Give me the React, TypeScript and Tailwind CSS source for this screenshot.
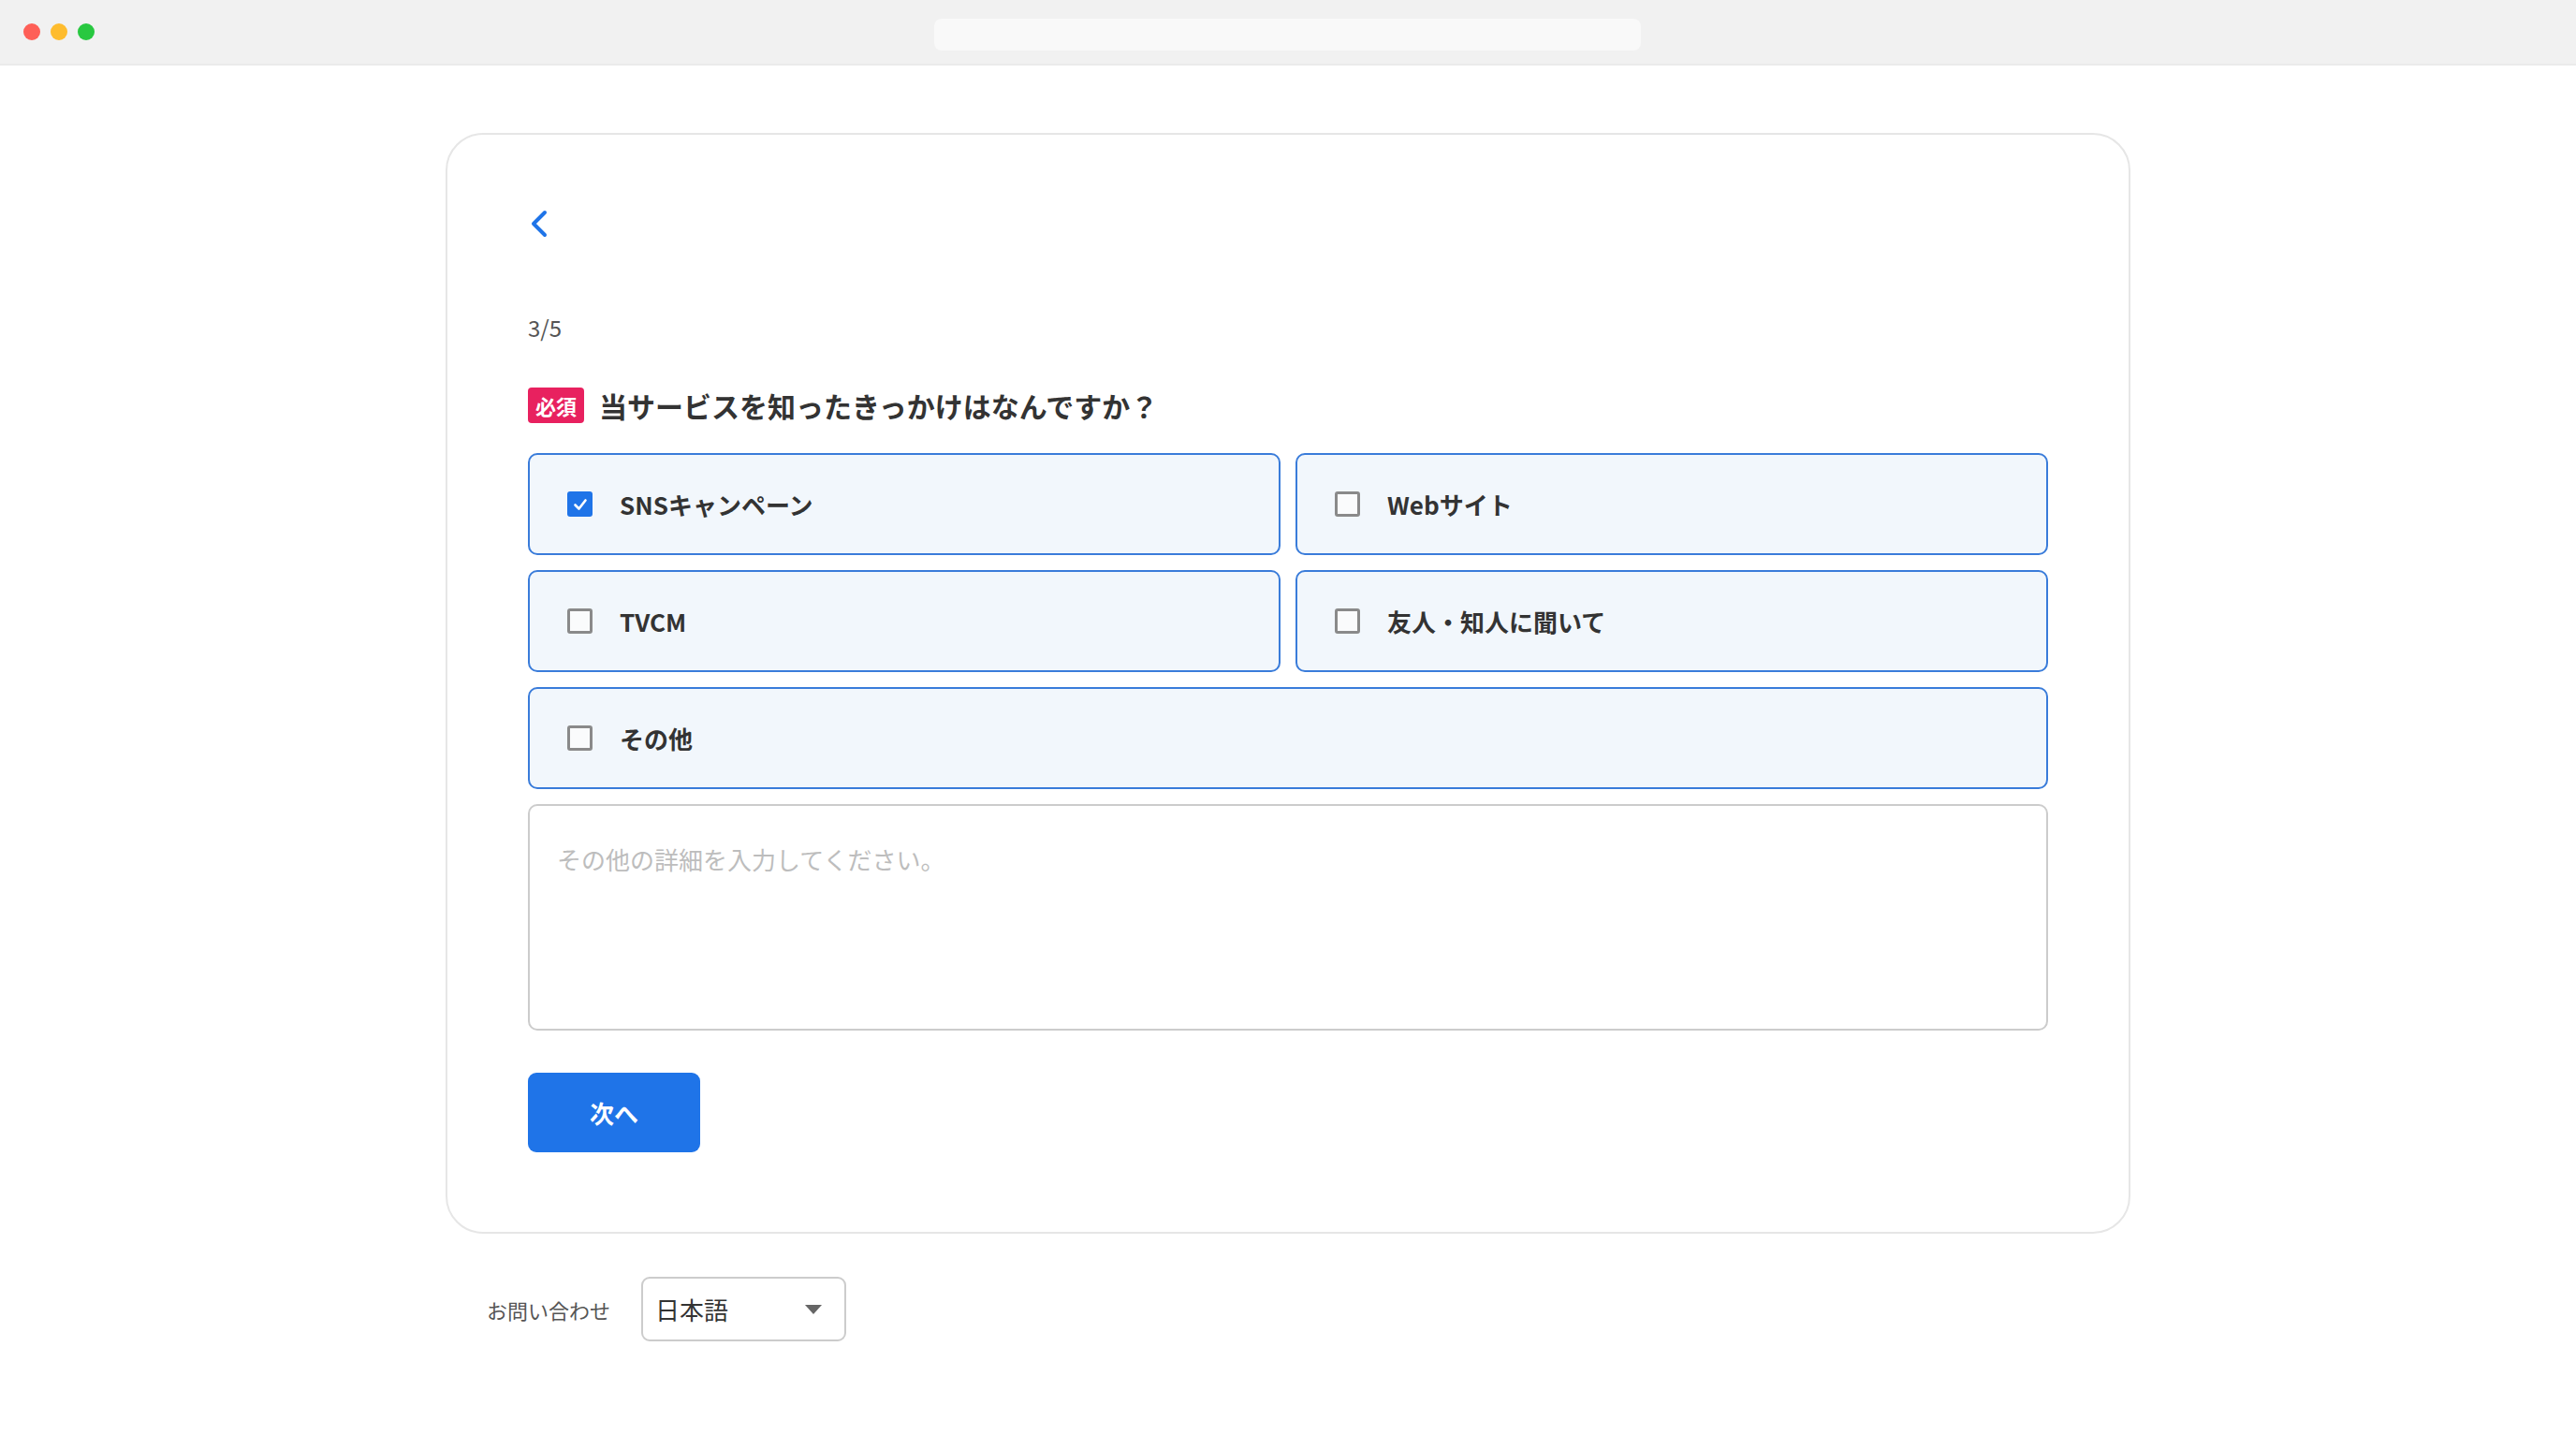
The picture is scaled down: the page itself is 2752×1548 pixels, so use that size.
import React from "react";

const FONT = { fontFamily: '"Noto Sans CJK JP", "Noto Sans", sans-serif' };

function CheckBox({ checked }: { checked: boolean }) {
  if (checked) {
    return (
      <span className="flex h-[27px] w-[27px] shrink-0 items-center justify-center rounded-[3px] bg-[#1f74e8]">
        <svg width="18" height="18" viewBox="0 0 18 18" fill="none">
          <path d="M3.5 9.5 L7.5 13.5 L14.5 4.5" stroke="#ffffff" strokeWidth="2.6" strokeLinecap="round" strokeLinejoin="round" />
        </svg>
      </span>
    );
  }
  return <span className="block h-[27px] w-[27px] shrink-0 rounded-[3px] border-[3px] border-[#8a8a8a] bg-[#fafbfc]" />;
}

function Option({ label, checked = false, className = "" }: { label: string; checked?: boolean; className?: string }) {
  return (
    <div className={`flex h-[109px] items-center gap-[29px] rounded-[10px] border-2 border-[#3a7cda] bg-[#f2f7fc] pl-[40px] ${className}`}>
      <CheckBox checked={checked} />
      <span className="text-[26px] font-bold leading-none text-[#333333]">{label}</span>
    </div>
  );
}

export default function App() {
  return (
    <div className="min-h-[1548px] w-full bg-white" style={FONT}>
      {/* browser chrome */}
      <div className="relative flex h-[70px] items-center border-b-2 border-[#ebebeb] bg-[#f1f1f1]">
        <div className="ml-[25px] flex gap-[11px]">
          <span className="block h-[18px] w-[18px] rounded-full bg-[#fe5f57]" />
          <span className="block h-[18px] w-[18px] rounded-full bg-[#febc2e]" />
          <span className="block h-[18px] w-[18px] rounded-full bg-[#28c840]" />
        </div>
        <div className="absolute left-[998px] top-[20px] h-[34px] w-[755px] rounded-[8px] bg-[#f9f9f9]" />
      </div>

      {/* card */}
      <div className="mx-auto mt-[72px] w-[1800px] rounded-[40px] border-2 border-[#e6e6e6] px-[86px] pb-[85px] pt-[79px]">
        <svg width="24" height="32" viewBox="0 0 24 32" fill="none" className="block">
          <path d="M18 4 L6 16 L18 28" stroke="#1f74e8" strokeWidth="4" strokeLinecap="round" strokeLinejoin="round" />
        </svg>

        <div className="mt-[79px] text-[24px] leading-[32px] text-[#555555]">3/5</div>

        <div className="mt-[48px] flex h-[37px] items-center gap-[16px]">
          <span className="flex h-[38px] w-[60px] items-center justify-center rounded-[4px] bg-[#e8215f] text-[22px] font-bold leading-none text-white">
            必須
          </span>
          <span className="text-[30px] font-bold leading-none text-[#333333]">当サービスを知ったきっかけはなんですか？</span>
        </div>

        <div className="mt-[33px] grid grid-cols-2 gap-[16px]">
          <Option label="SNSキャンペーン" checked />
          <Option label="Webサイト" />
          <Option label="TVCM" />
          <Option label="友人・知人に聞いて" />
          <Option label="その他" className="col-span-2" />
        </div>

        <textarea
          className="mt-[16px] block h-[242px] w-full resize-none rounded-[10px] border-2 border-[#cccccc] bg-white px-[29px] pt-[37px] text-[26px] leading-[39px] text-[#333333] outline-none placeholder:text-[#bdbdbd]"
          style={FONT}
          placeholder="その他の詳細を入力してください。"
        />

        <button
          className="mt-[45px] flex h-[85px] w-[184px] items-center justify-center rounded-[9px] bg-[#1f74e8] text-[26px] font-bold leading-none text-white"
          style={FONT}
        >
          次へ
        </button>
      </div>

      {/* footer */}
      <div className="mx-auto mt-[46px] flex w-[1800px] items-center gap-[33px] pl-[44px]">
        <span className="text-[22px] leading-none text-[#555555]">お問い合わせ</span>
        <div className="flex h-[69px] w-[219px] items-center justify-between rounded-[9px] border-2 border-[#cccccc] bg-white pl-[13px] pr-[24px]">
          <span className="text-[26px] leading-none text-[#333333]">日本語</span>
          <svg width="18" height="10" viewBox="0 0 18 10">
            <path d="M0 0 L18 0 L9 10 Z" fill="#666666" />
          </svg>
        </div>
      </div>
    </div>
  );
}
